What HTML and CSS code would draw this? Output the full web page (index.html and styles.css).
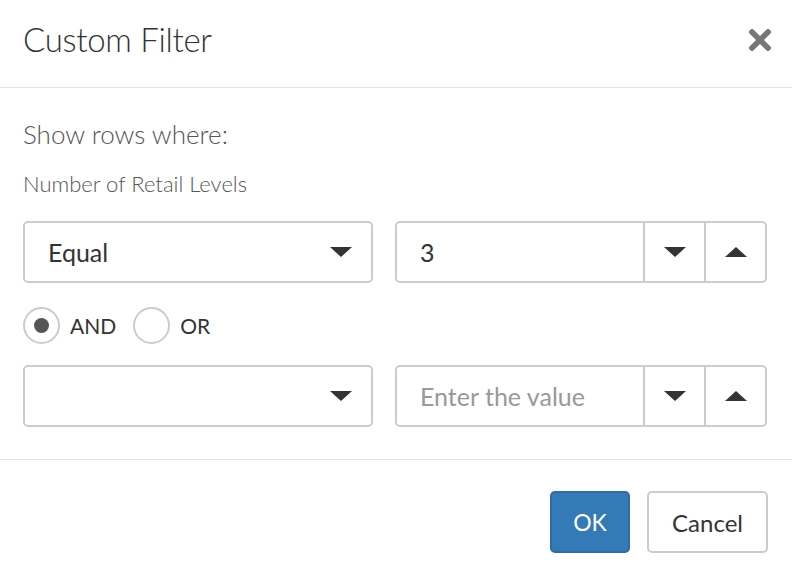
FILE: index.html
```html
<!DOCTYPE html>
<html>
<head>
<meta charset="utf-8">
<link rel="stylesheet" href="styles.css">
</head>
<body>
<div class="dialog">
  <div class="header">
    <h1 class="title">Custom Filter</h1>
    <span class="close">
      <svg width="22" height="22" viewBox="0 0 22 22"><path d="M3 3 L19 19 M19 3 L3 19" stroke="#777" stroke-width="5.5" stroke-linecap="square"/></svg>
    </span>
  </div>
  <div class="content">
    <div class="lead">Show rows where:</div>
    <div class="field">Number of Retail Levels</div>
    <div class="row">
      <div class="select"><span class="sel-text">Equal</span><span class="tri down"></span></div>
      <div class="numeric">
        <span class="num-text">3</span>
        <span class="spin"><span class="tri down"></span></span>
        <span class="spin"><span class="tri up"></span></span>
      </div>
    </div>
    <div class="radios">
      <span class="radio checked"><span class="dot"></span></span><span class="rlabel first">AND</span>
      <span class="radio"></span><span class="rlabel">OR</span>
    </div>
    <div class="row">
      <div class="select"><span class="sel-text"></span><span class="tri down"></span></div>
      <div class="numeric">
        <span class="num-text placeholder">Enter the value</span>
        <span class="spin"><span class="tri down"></span></span>
        <span class="spin"><span class="tri up"></span></span>
      </div>
    </div>
  </div>
  <div class="footer">
    <button class="btn primary">OK</button>
    <button class="btn">Cancel</button>
  </div>
</div>
</body>
</html>
```
FILE: styles.css
```css
html, body {
  margin: 0;
  padding: 0;
  background: #fff;
}
.dialog {
  width: 792px;
  height: 571px;
  font-family: "Lato", "Open Sans", sans-serif;
  color: #333;
  box-sizing: border-box;
}
.header {
  height: 87px;
  border-bottom: 1px solid #e5e5e5;
  display: flex;
  align-items: center;
  justify-content: space-between;
  padding: 0 21px 0 23px;
  box-sizing: content-box;
}
.title {
  margin: 0;
  font-size: 33px;
  font-weight: 300;
  line-height: 40px;
  color: #333;
  letter-spacing: -0.3px;
  padding-bottom: 10px;
}
.close {
  display: flex;
  width: 22px;
  height: 22px;
  padding-bottom: 8px;
}
.content {
  padding: 28px 23px 32px 23px;
  border-bottom: 1px solid #e5e5e5;
}
.lead {
  font-size: 26px;
  font-weight: 300;
  color: #555;
  line-height: 36px;
}
.field {
  font-size: 22px;
  font-weight: 300;
  color: #555;
  line-height: 28px;
  margin-top: 18px;
}
.row {
  display: flex;
  gap: 22px;
}
.content .field + .row {
  margin-top: 23px;
}
.select {
  width: 350px;
  height: 62px;
  box-sizing: border-box;
  border: 2px solid #ccc;
  border-radius: 5px;
  display: flex;
  align-items: center;
  justify-content: space-between;
  padding: 0 19px 0 23px;
}
.sel-text {
  font-size: 25px;
  color: #333;
  line-height: 30px;
}
.tri {
  width: 0;
  height: 0;
  border-left: 11px solid transparent;
  border-right: 11px solid transparent;
}
.tri.down {
  border-top: 10px solid #333;
}
.tri.up {
  border-bottom: 10px solid #333;
}
.numeric {
  width: 372px;
  height: 62px;
  box-sizing: border-box;
  border: 2px solid #ccc;
  border-radius: 5px;
  display: flex;
  align-items: stretch;
}
.num-text {
  flex: 1;
  display: flex;
  align-items: center;
  padding-left: 23px;
  font-size: 25px;
  color: #333;
}
.num-text.placeholder {
  color: #999;
}
.spin {
  width: 61px;
  box-sizing: border-box;
  border-left: 2px solid #ccc;
  display: flex;
  align-items: center;
  justify-content: center;
}
.radios {
  display: flex;
  align-items: center;
  height: 37px;
  margin: 24px 0 21px 0;
}
.radio {
  width: 37px;
  height: 37px;
  box-sizing: border-box;
  border: 2px solid #ccc;
  border-radius: 50%;
  display: flex;
  align-items: center;
  justify-content: center;
}
.dot {
  width: 15px;
  height: 15px;
  border-radius: 50%;
  background: #555;
}
.rlabel {
  font-size: 21px;
  color: #333;
  margin: 0 0 0 10px;
}
.rlabel.first {
  margin-right: 17px;
}
.footer {
  display: flex;
  justify-content: flex-end;
  gap: 17px;
  padding: 31px 24px 0 0;
}
.btn {
  height: 62px;
  box-sizing: border-box;
  border: 2px solid #ccc;
  border-radius: 5px;
  background: #fff;
  font-family: "Lato", "Open Sans", sans-serif;
  font-size: 24px;
  color: #333;
  padding: 0;
  width: 121px;
}
.btn.primary {
  width: 80px;
  font-size: 23px;
  background: #337ab7;
  border-color: #2e6da4;
  color: #fff;
}
```
